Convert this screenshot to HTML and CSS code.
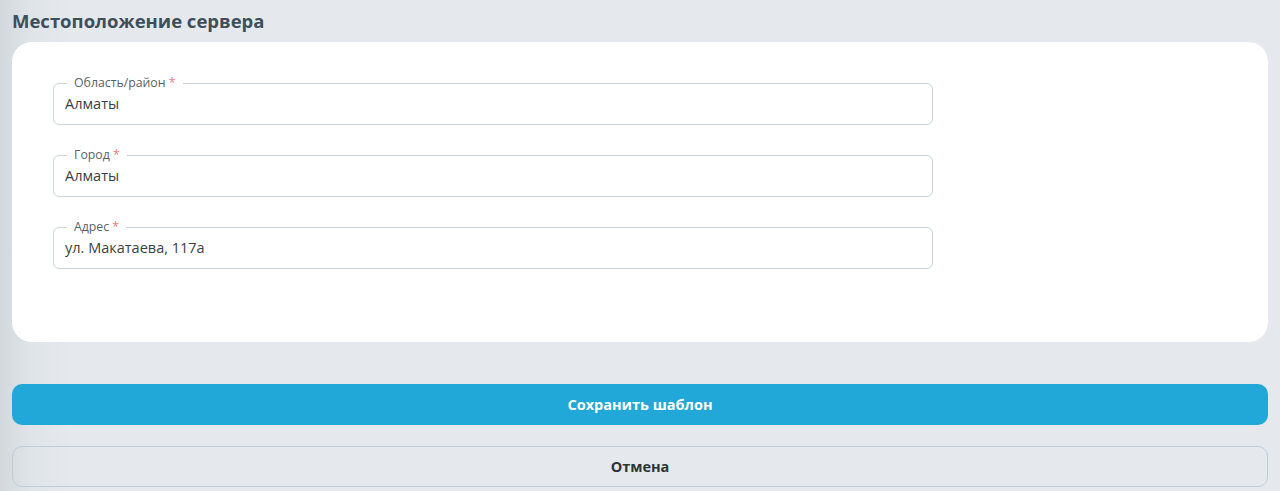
FILE: index.html
```html
<!DOCTYPE html>
<html lang="ru">
<head>
<meta charset="utf-8">
<title>Местоположение сервера</title>
<link rel="stylesheet" href="styles.css">
</head>
<body>
<div class="page">
  <h2 class="title">Местоположение сервера</h2>
  <div class="card">
    <fieldset class="field">
      <legend>Область/район <span class="req">*</span></legend>
      <div class="value">Алматы</div>
    </fieldset>
    <fieldset class="field">
      <legend>Город <span class="req">*</span></legend>
      <div class="value">Алматы</div>
    </fieldset>
    <fieldset class="field">
      <legend>Адрес <span class="req">*</span></legend>
      <div class="value">ул. Макатаева, 117а</div>
    </fieldset>
  </div>
  <button class="btn btn-primary">Сохранить шаблон</button>
  <button class="btn btn-secondary">Отмена</button>
</div>
</body>
</html>
```
FILE: styles.css
```css
html, body {
  margin: 0;
  padding: 0;
}
body {
  background: linear-gradient(to right, #d3d8dc 0px, #dfe4e8 30px, #e5e9ed 70px, #e5e9ed 100%);
  font-family: "Open Sans", "Liberation Sans", sans-serif;
  height: 491px;
  overflow: hidden;
}
.page {
  padding: 0 12px;
  display: flex;
  flex-direction: column;
}
.title {
  margin: 0;
  height: 42px;
  line-height: 42px;
  font-size: 18.5px;
  font-weight: 700;
  color: #3d4e5c;
}
.card {
  background: #fff;
  border-radius: 20px;
  padding: 33px 41px 73px;
  display: flex;
  flex-direction: column;
  gap: 22px;
}
.field {
  margin: 0;
  width: 880px;
  box-sizing: border-box;
  border: 1px solid #c8d5dd;
  border-radius: 6px;
  padding: 0 11px 8px;
  min-width: 0;
}
.field legend {
  margin-left: 2px;
  padding: 0 7px;
  font-size: 12.3px;
  line-height: 16px;
  color: #5a6269;
}
.req {
  color: #f07a7a;
}
.value {
  padding-top: 1px;
  height: 24px;
  line-height: 24px;
  font-size: 14.5px;
  color: #3a3f44;
}
.btn {
  font-family: "Open Sans", "Liberation Sans", sans-serif;
  font-size: 14.5px;
  font-weight: 700;
  width: 100%;
  box-sizing: border-box;
  border-radius: 10px;
  cursor: pointer;
}
.btn-primary {
  margin-top: 42px;
  height: 41px;
  background: #21a8d9;
  border: none;
  color: #fff;
}
.btn-secondary {
  margin-top: 21px;
  height: 41px;
  background: transparent;
  border: 1.5px solid #bccdd8;
  color: #2e3338;
}
```
